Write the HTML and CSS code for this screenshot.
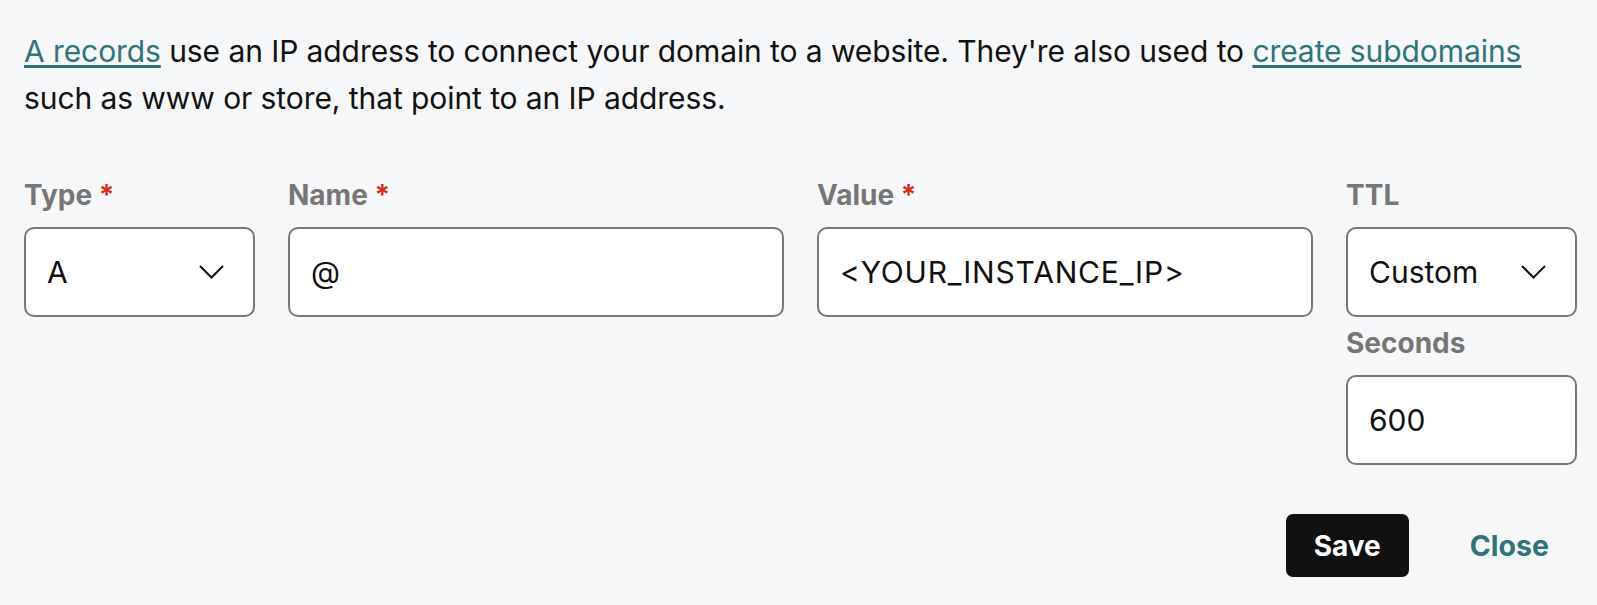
FILE: index.html
```html
<!DOCTYPE html>
<html>
<head>
<meta charset="utf-8">
<link rel="stylesheet" href="styles.css">
</head>
<body>
<div class="page">
  <p class="intro"><a href="#" class="link">A records</a> use an IP address to connect your domain to a website. They're also used to <a href="#" class="link">create subdomains</a><br>such as www or store, that point to an IP address.</p>
  <div class="fields">
    <div class="field">
      <div class="label">Type <span class="req">*</span></div>
      <div class="box select"><span>A</span><svg class="chev" viewBox="0 0 25 14" width="25" height="14"><path d="M1 1 L12.5 12.5 L24 1" fill="none" stroke="#111" stroke-width="2"/></svg></div>
    </div>
    <div class="field">
      <div class="label">Name <span class="req">*</span></div>
      <div class="box"><span>@</span></div>
    </div>
    <div class="field">
      <div class="label">Value <span class="req">*</span></div>
      <div class="box"><span class="wide">&lt;YOUR_INSTANCE_IP&gt;</span></div>
    </div>
    <div class="field">
      <div class="label">TTL</div>
      <div class="box select"><span>Custom</span><svg class="chev" viewBox="0 0 25 14" width="25" height="14"><path d="M1 1 L12.5 12.5 L24 1" fill="none" stroke="#111" stroke-width="2"/></svg></div>
      <div class="label sub">Seconds</div>
      <div class="box"><span>600</span></div>
    </div>
  </div>
  <div class="actions">
    <button class="save">Save</button>
    <a href="#" class="close">Close</a>
  </div>
</div>
</body>
</html>
```
FILE: styles.css
```css
html, body {
  margin: 0;
  padding: 0;
  background: #f6f7f9;
}
body {
  font-family: "Inter", "Noto Sans", sans-serif;
  color: #111111;
  width: 1597px;
  height: 605px;
  overflow: hidden;
}
.page {
  padding: 28px 20px 0 24px;
}
.intro {
  margin: 0;
  font-size: 30px;
  line-height: 47px;
  letter-spacing: -0.08px;
  white-space: nowrap;
}
.link {
  color: #2e7479;
  text-decoration: underline;
  text-underline-offset: 3px;
  text-decoration-thickness: 2.5px;
}
.fields {
  display: grid;
  grid-template-columns: 231px 496px 496px 231px;
  column-gap: 33px;
  margin-top: 55px;
}
.label {
  font-size: 28px;
  font-weight: 700;
  color: #767676;
  line-height: 36px;
  margin-bottom: 14px;
}
.label .req {
  color: #d3311e;
}
.label.sub {
  margin-top: 8px;
}
.box {
  box-sizing: border-box;
  height: 90px;
  border: 2px solid #777777;
  border-radius: 10px;
  background: #ffffff;
  display: flex;
  align-items: center;
  justify-content: space-between;
  padding: 0 29px 0 21px;
  font-size: 30px;
}
.wide {
  letter-spacing: 0.8px;
}
.chev {
  display: block;
}
.actions {
  display: flex;
  justify-content: flex-end;
  align-items: center;
  margin-top: 49px;
  padding-right: 28px;
  gap: 61px;
}
.save {
  width: 123px;
  height: 63px;
  background: #111111;
  color: #ffffff;
  border: none;
  border-radius: 7px;
  font-family: inherit;
  font-size: 28px;
  font-weight: 700;
  padding: 0;
}
.close {
  color: #2e7479;
  font-size: 28.5px;
  font-weight: 700;
  text-decoration: none;
}
```
